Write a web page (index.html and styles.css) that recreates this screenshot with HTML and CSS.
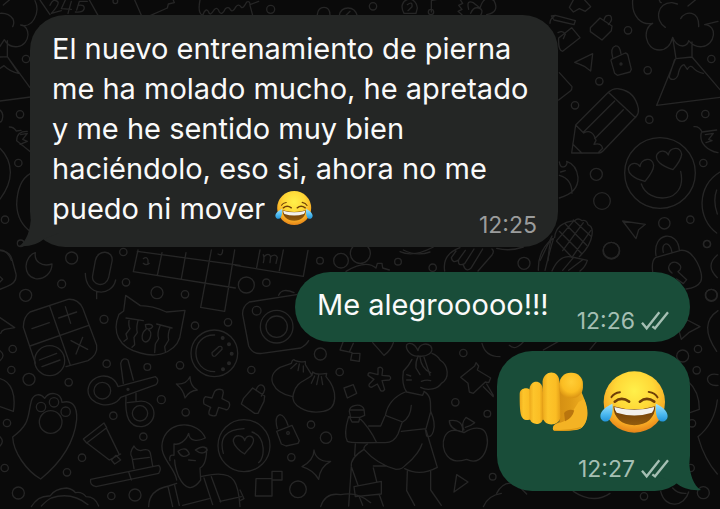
FILE: index.html
```
<!DOCTYPE html>
<html lang="es">
<head>
<meta charset="utf-8">
<meta name="viewport" content="width=device-width, initial-scale=1">
<title>Chat</title>
<link rel="stylesheet" href="styles.css">
</head>
<body>
<svg class="defs" aria-hidden="true">
  <defs>
    <radialGradient id="skin" cx=".5" cy=".32" r=".7">
      <stop offset="0" stop-color="#fff04a"/><stop offset=".45" stop-color="#ffd837"/><stop offset=".8" stop-color="#f7a823"/><stop offset="1" stop-color="#e27d17"/>
    </radialGradient>
    <linearGradient id="tear" x1="0" y1="0" x2="0" y2="1">
      <stop offset="0" stop-color="#a5e4fb"/><stop offset=".6" stop-color="#4bb9ef"/><stop offset="1" stop-color="#2293d8"/>
    </linearGradient>
    <linearGradient id="mouth" x1="0" y1="0" x2="0" y2="1">
      <stop offset="0" stop-color="#6a3a08"/><stop offset="1" stop-color="#925c0d"/>
    </linearGradient>
    <linearGradient id="finger" x1="0" y1="0" x2="1" y2="0">
      <stop offset="0" stop-color="#eda91b"/><stop offset=".3" stop-color="#fdc52b"/><stop offset=".75" stop-color="#fbbd24"/><stop offset="1" stop-color="#e49e17"/>
    </linearGradient>
    <radialGradient id="tip" cx=".5" cy=".36" r=".62">
      <stop offset="0" stop-color="#ffcd36"/><stop offset=".65" stop-color="#fbbd22"/><stop offset="1" stop-color="#dd9714"/>
    </radialGradient>
    <linearGradient id="palm" x1="0" y1="0" x2="1" y2="0">
      <stop offset="0" stop-color="#d08a12"/><stop offset=".5" stop-color="#dd9916"/><stop offset="1" stop-color="#f3b222"/>
    </linearGradient>
    <symbol id="joy" viewBox="267 32 210 196">
      <circle cx="373" cy="130" r="94" fill="url(#skin)"/>
      <g fill="none" stroke="#6f3f08" stroke-linecap="round">
        <path d="M303 115q8-13 26-15M417 99q20 3 27 17" stroke-width="6"/>
        <path d="M313 129q21-17 44 0M390 129q21-17 44 0" stroke-width="8"/>
      </g>
      <path d="M309 143q64 19 128 0c0 34-25 58-64 58s-64-24-64-58z" fill="url(#mouth)"/>
      <path d="M312 145q61 18 122 0q-1 12-7 18q-54 17-108 0q-6-7-7-18z" fill="#f3f1ec"/>
      <path d="M306 135c-17 7-37 22-37 38 0 11 8 17 16 17 17 0 24-29 21-55zM439 135c17 7 36 22 36 38 0 11-8 17-16 17-17 0-23-29-20-55z" fill="url(#tear)"/>
    </symbol>
    <symbol id="hand" viewBox="33 38 208 178">
      <path d="M50 96h92v84H50z" fill="#dc9815"/>
      <path d="M150 70h60q8 30 18 50c16 38 8 70-10 84-14 10-50 8-80 8-8-6-3-19 7-22l8-4z" fill="url(#palm)"/>
      <path d="M226 118c16 38 9 74-8 86-12 9-51 6-82 8-6-7-1-17 10-21 26-6 42-16 50-42l14-22z" fill="#f4b324"/>
      <path d="M170 184q22-10 27-32-18-6-30 8z" fill="#b9750e"/>
      <path d="M138 211q50 2 78-8" fill="none" stroke="#dc9815" stroke-width="3" stroke-linecap="round"/>
      <path d="M35 104c0-22 34-24 36-2v62c0 20-22 20-28 10-8-10-8-40-8-70z" fill="url(#finger)"/>
      <path d="M64 90c2-31 38-31 40 0v86c-2 22-34 20-38 4z" fill="url(#finger)"/>
      <path d="M103 66c5-36 49-35 50 0l3 104c-1 30-47 31-51 6z" fill="url(#finger)"/>
      <rect x="153" y="40" width="70" height="76" rx="33" fill="url(#tip)"/>
    </symbol>
    <symbol id="checks" viewBox="0 0 84 60">
      <path d="M3 35l14 17L55 4M34 46l8 6L81 4" fill="none" stroke="currentColor" stroke-width="7"/>
    </symbol>
  </defs>
</svg>

<main class="chat">
  <svg class="wallpaper" viewBox="0 0 2160 1527" preserveAspectRatio="xMinYMin slice" aria-hidden="true">
    <!-- top edge and left side -->
    <g>
      <path d="M0 40q26-2 39 17q5 12-1 23M62 75c35 12 60-38 43-73M62 75c30 2 31 58-9 65q-28 3-40-21L0 139M10 15L28 0M22 122v48L0 171M22 170l68 93M22 170l34 50q-24-4-44-23L0 205M0 303l92-12"/>
      <path d="M28 381q12-1 21 12l14-2M82 394q-32-1-32 28l41 33M62 404l20-4-14 18 14 6-22 9M0 445q30 30 31 70t-31 82M92 520q-40 22-42 93 2 55 44 84M0 750q24 2 34 31M0 330q10 8 8 22t-8 14"/>
      <circle cx="78" cy="177" r="11"/><circle cx="60" cy="343" r="11"/><circle cx="55" cy="489" r="11"/><circle cx="15" cy="659" r="11"/><circle cx="62" cy="730" r="10"/>
      <path d="M120 0l30 44M268 0l26 46M150 16q10-24 24-10 4 8-20 34l30-8M196 0l-12 26 30 2M214 4l-10 36M230 30l8-26h24M234 16q22-4 18 12-4 10-26 8M404 0l20 46M452 46l50-22 3-12 18-4-4-10M600 0q-8 40 8 46 10-26 18-10 4 14 16-6 10-12 16 6 8 12 18-10 10-8 16 4 6 8 16-10 8-10 16 2 6 4 16-16 10-4 10 8l26-10M750 16l8 30"/>
      <circle cx="346" cy="4" r="7"/><circle cx="812" cy="28" r="12"/><path d="M952 44q2-22 20-22t18 24M1018 46q4-22 26-22t28 24M1050 34l-12 12M1212 40c-24-42 34-62 40-16l-4 16zM1222 14q16-12 14 6l-12 12M1294 36V2l26-6M1386 44l-12-10 12-6-10-12 12-6-8-12M1412 40q8-20 24-16t6 22M1406 28q-8-30 14-20l20 16q12-42 42-22 18 34-22 42"/>
      <circle cx="1119" cy="19" r="11"/><circle cx="1293" cy="36" r="8"/>
    </g>
    <!-- right side, beside the first message -->
    <g transform="translate(1620 0)">
      <path d="M100 0l-12 22 12 14 18-10 18 8 16-14-18-20M34 48l8 12 60 14 4-12-60-16zM30 70q0-14 12-20M56 114l39-31 25 30-52 41q-14-2-12-40zM54 98q14-8 22 4l-6 14"/>
      <path d="M180 54l36 24-2 14-28 28-35-25v-12zM192 60q4-18 19-13 10 10-6 27M214 178l42-19q8 2 8 8l10 41-4 8-38 10-8-6-11-38zM218 172q-8-28 8-34 14-2 17 24M104 187l54-26-6 52-19-14q-12-6-29-12z"/><circle cx="243" cy="192" r="3"/>
      <circle cx="264" cy="91" r="11"/><circle cx="323" cy="211" r="11"/><circle cx="178" cy="244" r="11"/><circle cx="105" cy="316" r="11"/><circle cx="328" cy="359" r="11"/><circle cx="426" cy="347" r="17"/><circle cx="496" cy="342" r="11"/><circle cx="514" cy="177" r="11"/>
      <path d="M278 0c-4 52 28 76 60 70-32 14-24 80 20 80q30 0 40-38 10 26 30 26 16-2 18-16 16 20 40 18c40-4 48-64 8-66l40-10M376 82c-34-20-24-76 20-74l16 4M358 0q2 8 6 8M444 18l22-18M422 56c14-26 56-24 54 24M398 112l10 64 48-5V126M406 178l-56 138 190-24M456 171l84 98M404 178l-16 50q0 12 14 10 12-4 14-22 6-20 16-22l10 14q8-14 16-6 12 14 32 18"/>
      <path d="M58 218l38 42q0 10-4 12l-36 28M95 459l12-84 98-98q16-14 34-10 46 8 56 58 2 14-6 24l-100 104q-6 6-12 6zM205 277l82 76M224 303l-94 94M250 329l-86 87M107 375l24 24q26-14 37 22l-6 12q22-6 26 12l-12 12M98 432l28 28"/>
      <path d="M58 486q2 18 16 14 10-8 6-16 30 10 34 48 2 46-56 62M58 526q38 10 38 54M62 516l14-4"/>
      <circle cx="169" cy="523" r="18"/><circle cx="186" cy="603" r="25"/><circle cx="490" cy="489" r="11"/><circle cx="373" cy="670" r="17"/><circle cx="451" cy="659" r="11"/><circle cx="501" cy="732" r="10"/><circle cx="214" cy="752" r="25"/>
      <circle cx="360" cy="519" r="106"/><path d="M315 544c-34-8-56-26-48-44 8-14 26-12 33 0 2-24 38-32 41-4 0 18-14 34-26 48zM399 509c-36-12-56-28-48-46 10-16 28-10 34 2 4-24 38-28 40-2-2 18-14 32-26 46zM304 552c20 62 140 60 118-38M462 380q16-2 24 16l44-6M484 398c-8 32 20 54 50 60M496 404l24-4-14 18 10 4-18 6M540 516c-70 40-70 140-10 183M530 570q-12 32 2 72M248 663l68 10-20 16-8 27z"/>
      <path d="M44 712q4-44 60-50 10-10 22 0 14-4 18 12 16 6 12 30-4 34-38 66M100 660l52 48M76 672l64 64M58 694l66 66M50 724l46 48M96 772l56-80M68 752l62-84M50 722l50-58M36 708l-36 74M34 712q-8 36-10 70"/>
    </g>
    <!-- strip between first and second messages -->
    <g transform="translate(1200 705)">
      <path d="M0 50q40 18 100-14M134 108q-8-50 46-70M168 48l-14 20q4 20 22 6l20-28M176 74q-4 22 18 12l28-44M190 90q8 24 24 8l34-56M276 42q8 6 0 18l-42 48M290 40q40 10 80-4M415 106q-2-60 44-96M435 106q20-80 26-96M456 108q22-50 60-42l46 10q-6 20-22 32M488 106l32-38M506 106l42-32"/>
      <circle cx="98" cy="98" r="11"/><circle cx="372" cy="85" r="18"/><circle cx="634" cy="46" r="24"/><circle cx="921" cy="27" r="11"/><circle cx="934" cy="180" r="17"/>
      <path d="M768 62c-12-70 66-80 70-16M790 52c-8-30 20-38 26 0M758 110q-4-32 8-42l76-22c40-4 72 70 60 94-8 14-24 20-44 22M816 114c-20-14-6-36 12-32 20 8 16 22 6 28l26 24-10 12-20-14M952 60q-38 32 0 68"/>
    </g>
    <!-- lower left -->
    <g transform="translate(0 750)">
      <path d="M0 2q30 2 36 26l12 44q4 26-28 38l-20 8M0 80l8 8-8 8M106 8c-34 10-40 70 0 78 28 4 50-18 50-44-32 10-54-8-50-34zM0 203l44 30-30 5q-10 4-12 12M0 386c36 10 48 50 40 98L0 470"/>
      <path d="M286 32c6-36 56-32 50 2l-10 48c-8 34-54 24-48-6zM256 70c0 70 80 72 91 20M290 124v22M414 0l-14 65 306 49M412 4l308 42M486 8l-14 68M558 8l-14 78M634 0l-32 172 72 12 30-184M430 40q8 8 18 0M430 26q10-8 14 4v12M654 12q14 8 14-12"/>
      <path d="M106 340L70 232q0-32 20-46l114-38q30-2 44 26l42 112q4 28-26 46l-66 18M149 168l62 178M90 288l176-62M96 236l52-18M176 204l54-18M196 170l16 50M213 272l50 26M248 262l-20 50"/><circle cx="149" cy="332" r="45"/><path d="M118 330l52-20M126 350l54-20"/>
      <path d="M377 136l44 31q36 0 78 19l56-5-12 62c-4 58-62 84-122 66-66-16-86-64-64-116l14-10zM378 204l52 8M388 206q-4 20 2 30l-12 16 4 14-10 8M414 212q-6 20-2 36l-10 14 2 22-8 8M470 222l46 12M480 228q-10 24-4 38l-10 16-2 26M510 234q-8 20-4 36l-12 20 2 14M436 224q20-4 22 6-8 12-20 4zM438 238c-14 10-16 34-2 38 16-2 22-30 10-36"/>
      <circle cx="643" cy="310" r="70"/><path d="M644 255c-76-2-74 110 0 110M636 308l20-18q12-4 10 8l-20 20q-10 4-10-10z"/>
      <g class="dots"><circle cx="668" cy="264" r="4"/><circle cx="687" cy="283" r="4"/><circle cx="695" cy="311" r="4"/><circle cx="687" cy="340" r="4"/><circle cx="669" cy="358" r="4"/><circle cx="384" cy="418" r="3"/></g>
      <circle cx="307" cy="422" r="25"/><circle cx="420" cy="490" r="23"/><path d="M362 442c-26 40-98 24-98-22 4-50 76-58 90-10l112-30q14 10 2 24zM370 400l-8-60q6-20 22-10l16 60M378 440c-4 62 10 92 48 90 54-10 44-84-10-76l-34 4M408 430v22"/>
      <path d="M122 687c-42-24-82-80-84-126 54-40 44-62 56-108 6-20 26-26 40-8 12-20 48-22 52 12 32-8 46 12 44 52-8 76-54 134-108 178z"/><circle cx="152" cy="516" r="34"/><circle cx="123" cy="471" r="14"/><circle cx="162" cy="457" r="14"/><circle cx="197" cy="485" r="14"/>
      <path d="M250 567l62-48 8 14-60 46zM320 536l38 78M262 580l66 50 34-18M334 630l14-14 14 14-18 12zM272 688l204-42q10 10 0 24l-188 40q-20-4-16-22zM386 666l8 24M402 656l-6-34q-10-12 6-34 6 12 20 14 28-10 30 12l6 34M400 628l48-6"/>
      <path d="M570 380q0 28 22 40-24 2-37 24-4-24-26-42 30 2 41-22zM644 424q8-10 24-4l2 8-4 18 20 10q6 8 0 18-4 8-10 4l-20-6-8 24q-8 4-20-2-4-6 4-22l-20-10q-4-14 4-22l20 4z"/>
      <path d="M530 690c-4-40-60-70-40-124 24-60 106-50 126-2-24 12-48 10-50-14-8 24-30 36-44 32v34q-16-4-12 16M524 630q0 20 12 50 30 60 66 10l-2-36q20-10 20-60M534 604q24-18 34 8-20 18-34-8zM586 600q28-18 36 0-14 18-36 0zM566 630l20 2M446 770q0-50 60-62l24-8M602 680q80-20 100 12 14 20 18 78M504 710l14 60M524 706l14 60M612 684l26 80M634 680l28 76M660 754l64-14M548 766l80-20"/>
      <path d="M94 770q20-34 56-32 14-22 50-24 20 4 26 14 20-4 32 12 28 0 38 28M124 768q20-20 30-24 60-20 110 20"/>
      <circle cx="215" cy="24" r="18"/><circle cx="185" cy="102" r="12"/><circle cx="77" cy="136" r="18"/><circle cx="370" cy="6" r="11"/><circle cx="378" cy="97" r="11"/><circle cx="471" cy="128" r="18"/><circle cx="555" cy="133" r="11"/><circle cx="585" cy="227" r="11"/><circle cx="684" cy="217" r="11"/><circle cx="312" cy="208" r="12"/><circle cx="38" cy="297" r="11"/><circle cx="34" cy="360" r="11"/><circle cx="87" cy="388" r="18"/><circle cx="206" cy="397" r="11"/><circle cx="320" cy="341" r="11"/><circle cx="442" cy="351" r="10"/><circle cx="540" cy="346" r="11"/><circle cx="484" cy="449" r="12"/><circle cx="340" cy="497" r="11"/><circle cx="430" cy="560" r="11"/><circle cx="557" cy="487" r="11"/><circle cx="21" cy="519" r="11"/><circle cx="14" cy="654" r="11"/><circle cx="246" cy="623" r="11"/><circle cx="201" cy="667" r="11"/><circle cx="55" cy="729" r="18"/><circle cx="334" cy="738" r="11"/><circle cx="405" cy="735" r="18"/><path d="M0 302q18 14 0 30M0 560q14 14 0 28"/>
    </g>
    <!-- lower middle -->
    <g transform="translate(720 750)">
      <path d="M60 0L50 52M-14 46l204 33 14-78M130 0l-12 62M70 14q4 10 0 24M72 20q14-14 20 0l-2 18M92 20q14-10 20 2l-4 18M318 64q60-36 90-10l4-14h14l2 14 20 6M490 0q40 20 80 6"/>
      <circle cx="19" cy="105" r="24"/><circle cx="79" cy="98" r="11"/><circle cx="240" cy="32" r="10"/><circle cx="303" cy="32" r="22"/><circle cx="361" cy="10" r="30"/><circle cx="474" cy="35" r="10"/>
      <path d="M170 134l-142 22q-22 14-20 38l18 94q12 26 40 22l116-16q18-10 24-22M116 136q10-24 46-8"/><circle cx="110" cy="230" r="49"/><circle cx="110" cy="230" r="32"/><circle cx="50" cy="182" r="13"/><circle cx="241" cy="312" r="18"/><circle cx="34" cy="360" r="11"/><circle cx="299" cy="366" r="11"/>
      <path d="M158 440c-60-12-84-60-38-88l34-12q4-16 12-8 14 6 30 2l0 10 20 32M170 340l-18 16M178 342l-4 20M190 348v18M216 376l2-10q10 10 42 4l-2 10c36 40 36 98-8 104-50 10-100-18-90-52 8-38 36-38 56-56zM224 378l-10 22M236 376l-6 28M244 380l4 24"/>
      <path d="M38 414l36 24-2 16-18 36-10 0-40-28 6-16zM48 420q8-20 20-14 14 10-4 32M110 544l46-18 22 46-4 8-36 8-14-6zM112 536q-10-36 8-42 14 2 24 32"/><circle cx="144" cy="549" r="4"/><circle cx="213" cy="524" r="11"/><circle cx="258" cy="563" r="17"/><circle cx="154" cy="622" r="11"/><circle cx="174" cy="718" r="25"/>
      <circle cx="12" cy="587" r="78"/><path d="M-50 610q-20-70 62-74M36 546c44 16 38 80 20 92M-20 574c0-24 30-20 34-2 6-20 30-16 26 2-2 16-20 26-26 38-14-8-32-24-34-38z"/>
      <path d="M222 600q6 36 50 34-32 16-36 54-16-28-50-38 36-20 36-50zM48 686h48v52H46zM96 664h30v26H96zM312 414l28-10 10 26-28 14zM310 274l-10 26 36 8M336 310h24l-2 24-26-4zM340 280l-12 26M398 278l34 38q20-14 28-38"/>
      <path d="M414 354q10-6 14 4l-2 18 22 2q8 6 0 12l-22 2 8 26q-4 8-12 4l-10-20-18 10q-10-2-6-10l14-14-18-12q0-8 6-8l24 6z"/>
      <!-- woman: bow, hair and face -->
      <path d="M534 318c-22 2-38-20-34-34 8-8 24-4 34 18 4-22 26-24 38-14 14 20-14 34-38 30zM534 320q-8 16-6 34l12 20M540 322q4 34 32 46M552 322l18 54M516 328q-10 20-26 36-6 40 10 62l48 10 4-10M576 310c10 4 20 12 24 20 26 16 30 56 4 70-10 16-40 24-62 12M544 394q16-6 28-2M500 374l12 4M500 390h14"/>
      <!-- woman: blouse, arms and basket -->
      <path d="M496 426q-50 20-60 70l52 20q24-14 26-50M552 424c26 16 18 40 20 62l-14 50-74 8M434 500l-12 28-36 0M486 518l-12 34q-12 26-38 26h-56M328 484c0-20 36-26 44-6l2 18-14 6h-28zM332 480h38M326 500c-8 26-14 56-4 74 6 6 30 4 88 4M356 502q32 30 54 76M328 500l8 16h20l4-14M572 484q16 36 8 60-6 20-20 14l-4-20"/>
      <!-- woman: skirt and legs -->
      <path d="M382 582q-12 8-10 16c30 34 58 50 96 60 18 0 22-6 30-14 28-22 44-48 48-62M558 540l34 112q-52 28-98 4M372 598q-42 26-38 52l20 56M346 582l-2 34M400 654l10 40M400 648h40M342 710l82-16v38l-78 8zM418 734l12 34M334 650l-8 118M358 740l10 26M502 664l-2 58 24 44M572 664v56l32 46"/>
      <circle cx="646" cy="457" r="11"/><circle cx="742" cy="491" r="10"/><circle cx="670" cy="309" r="11"/><circle cx="758" cy="680" r="10"/><path d="M726 280q10 40 54 40M708 338l8 10-4 12 40 24-6 14-10-2-36 34-12-4-4-26-22-18 42-34zM730 410l30 30M740 402l20 34"/>
      <path d="M672 548c-62-30-76 40-50 70 18 20 38 16 58 10 60 30 82-80 42-92q-22-6-50 12zM668 546q-40-8-40-34 42-6 40 34zM672 540q-10-20 6-38l26 16q-12 10-28 14M650 674l34 22-42 30z"/>
      <path d="M242 770q14-44 60-36 50-10 90 24M730 770q14-34 54-40M0 720l12 26-12 6"/>
    </g>
    <!-- right side, beside the outgoing messages -->
    <g transform="translate(1890 720)">
      <path d="M172 240l38 20-34 18-22 20-6-22zM264 212q-60 40-4 122M264 404c-44-10-40 38 0 32M174 424q34 30 34 84l-28 10M204 590q50-40 58-110M204 590q20 70 58 112M92 754c14 56 72 46 84 2M128 744q16 18 40 16"/>
      <circle cx="244" cy="166" r="18"/><circle cx="204" cy="327" r="11"/><circle cx="200" cy="391" r="11"/><circle cx="158" cy="348" r="18"/><circle cx="186" cy="550" r="11"/><circle cx="182" cy="684" r="11"/><circle cx="220" cy="758" r="18"/><circle cx="42" cy="769" r="11"/><path d="M-362 316q20 20 50-20M-260 330l60-34M-100 304l-20 24M-400 760q20-40 60-28l30 30M-170 754q60 40 110 6"/>
    </g>
  </svg>

  <article class="bubble incoming">
    <p class="text">El nuevo entrenamiento de pierna me ha molado mucho, he apretado y me he sentido muy bien haciéndolo, eso si, ahora no me puedo ni mover <svg class="emoji" role="img" aria-label="😂"><use href="#joy"/></svg></p>
    <div class="meta"><time>12:25</time></div>
    <svg class="tip" viewBox="0 0 40 34" aria-hidden="true"><path d="M12 0C12 18 7 29 0 33C10 34 19 31 25 26L40 20V0Z" fill="currentColor"/></svg>
  </article>

  <article class="bubble outgoing short">
    <p class="text">Me alegrooooo!!!</p>
    <div class="meta"><time>12:26</time><svg class="checks" role="img" aria-label="Entregado"><use href="#checks"/></svg></div>
  </article>

  <article class="bubble outgoing large">
    <p class="reactions"><svg class="big" role="img" aria-label="🫵"><use href="#hand"/></svg><svg class="big" role="img" aria-label="😂"><use href="#joy"/></svg></p>
    <div class="meta"><time>12:27</time><svg class="checks" role="img" aria-label="Entregado"><use href="#checks"/></svg></div>
    <svg class="tip" viewBox="0 0 40 34" aria-hidden="true"><path d="M12 0C12 18 7 29 0 33C10 34 19 31 25 26L40 20V0Z" fill="currentColor"/></svg>
  </article>
</main>
</body>
</html>
```
FILE: styles.css
```
* {
  box-sizing: border-box;
}

body {
  margin: 0;
  background: #0a0a0a;
  font-family: Inter, "Liberation Sans", sans-serif;
}

.defs {
  position: absolute;
  width: 0;
  height: 0;
}

.chat {
  position: relative;
  display: flex;
  flex-direction: column;
  align-items: flex-start;
  min-height: 100vh;
  padding: 15px 30px;
  overflow: hidden;
}

.wallpaper {
  position: absolute;
  inset: 0;
  width: 100%;
  height: 100%;
  fill: none;
  stroke: #262626;
  stroke-width: 4;
  stroke-linecap: round;
  stroke-linejoin: round;
}

.dots {
  fill: #262626;
}

.bubble {
  position: relative;
  isolation: isolate;
  display: grid;
  max-width: 80%;
  padding: 14px 21px 18px 22px;
  border-radius: 35px;
}

.incoming {
  color: #242625;
  background: #242625;
}

.outgoing {
  align-self: flex-end;
  color: #194d39;
  background: #194d39;
}

.text {
  grid-area: 1 / 1;
  margin: 0;
  color: #fafafa;
  font-size: 29px;
  line-height: 40px;
}

.meta {
  grid-area: 1 / 1;
  place-self: end;
  display: flex;
  align-items: center;
  gap: 6px;
  margin-bottom: -9px;
  color: #9b9c9c;
  font-size: 23px;
  line-height: 26px;
}

.outgoing .meta {
  color: #a5bfb3;
}

.short {
  grid-template-columns: auto auto;
  column-gap: 28px;
  margin-top: 25px;
  padding: 13px 21px 17px 22px;
}

.short .meta,
.large .meta {
  grid-area: auto;
}

.large {
  row-gap: 22px;
  margin-top: 9px;
  padding: 19px 21px 18px 22px;
}

.emoji {
  width: 38px;
  height: 36px;
  margin-left: 2px;
  vertical-align: -7px;
}

.reactions {
  display: flex;
  gap: 10px;
  margin: 0;
}

.big {
  width: 70px;
  height: 64px;
}

.checks {
  width: 28px;
  height: 20px;
}

.tip {
  position: absolute;
  z-index: -1;
  bottom: 0;
  left: -11px;
  width: 40px;
  height: 34px;
}

.outgoing .tip {
  right: -11px;
  left: auto;
  transform: scaleX(-1);
}
```
